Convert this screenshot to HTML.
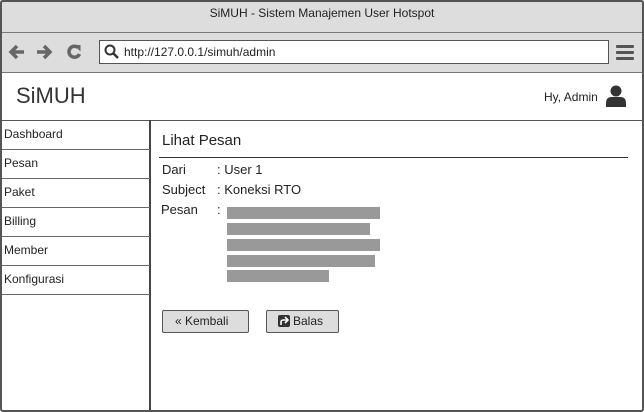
<!DOCTYPE html>
<html><head><style>
*{margin:0;padding:0;box-sizing:border-box}
body{width:644px;height:412px;overflow:hidden;font-family:"Liberation Sans",sans-serif;color:#222;background:#fff;position:relative}
.abs{position:absolute}
.frame{left:0;top:0;width:644px;height:412px;border:2px solid #555;border-radius:3px}
.side a{position:absolute;left:4px;font-size:12px;color:#222}
.hl{position:absolute;left:1px;width:149px;height:1px;background:#666}
.bar{position:absolute;left:227px;height:12px;background:#999}
.btn{position:absolute;top:310px;height:23px;background:#ddd;border:1px solid #555;border-radius:2px;font-size:12px;line-height:21px}
</style></head><body>
<div class="abs" style="left:0;top:0;width:644px;height:33px;background:#ddd"></div>
<div class="abs" style="left:0;top:6px;width:644px;text-align:center;font-size:12px">SiMUH - Sistem Manajemen User Hotspot</div>
<div class="abs" style="left:0;top:32px;width:644px;height:1px;background:#777"></div>
<div class="abs" style="left:0;top:33px;width:644px;height:39px;background:#ddd"></div>
<div class="abs" style="left:0;top:72px;width:644px;height:1px;background:#777"></div>
<svg class="abs" style="left:8px;top:43px" width="80" height="18" viewBox="0 0 80 18">
<path d="M3 9h13M9 3L3 9l6 6" stroke="#666" stroke-width="3.5" fill="none"/>
<path d="M29 9h13M36 3l6 6-6 6" stroke="#666" stroke-width="3.5" fill="none"/>
<path d="M70 4.5a5.5 5.5 0 1 0 1.5 6.5" stroke="#666" stroke-width="3.5" fill="none"/><path d="M66 2l6.5 0 0 6.5z" fill="#666"/>
</svg>
<div class="abs" style="left:99px;top:40px;width:510px;height:24px;background:#fff;border:1px solid #555"></div>
<svg class="abs" style="left:104px;top:44px" width="16" height="16"><circle cx="6" cy="6" r="4.5" stroke="#333" stroke-width="2" fill="none"/><path d="M9 9l5 5" stroke="#333" stroke-width="2.5"/></svg>
<div class="abs" style="left:124px;top:45px;font-size:12px">http://127.0.0.1/simuh/admin</div>
<svg class="abs" style="left:616px;top:44px" width="18" height="18"><rect x="0" y="1" width="18" height="3" rx="1" fill="#555"/><rect x="0" y="7" width="18" height="3" rx="1" fill="#555"/><rect x="0" y="13" width="18" height="3" rx="1" fill="#555"/></svg>
<div class="abs" style="left:16px;top:83px;font-size:22px;color:#333">SiMUH</div>
<div class="abs" style="left:544px;top:90px;font-size:12px">Hy, Admin</div>
<svg class="abs" style="left:606px;top:85px" width="20" height="22"><circle cx="10" cy="6" r="5.5" fill="#333"/><path d="M0 22v-5a5 5 0 0 1 5-5h10a5 5 0 0 1 5 5v5z" fill="#333"/></svg>
<div class="abs" style="left:0;top:120px;width:644px;height:1px;background:#555"></div>
<div class="abs" style="left:149px;top:120px;width:2px;height:292px;background:#444"></div>
<div class="side">
<a style="top:127px">Dashboard</a><a style="top:156px">Pesan</a><a style="top:185px">Paket</a><a style="top:214px">Billing</a><a style="top:243px">Member</a><a style="top:272px">Konfigurasi</a>
</div>
<div class="hl" style="top:149px"></div><div class="hl" style="top:178px"></div><div class="hl" style="top:207px"></div><div class="hl" style="top:236px"></div><div class="hl" style="top:265px"></div><div class="hl" style="top:294px"></div>
<div class="abs" style="left:162px;top:132px;font-size:15px">Lihat Pesan</div>
<div class="abs" style="left:159px;top:157px;width:469px;height:1px;background:#333"></div>
<div class="abs" style="left:162px;top:162px;font-size:13px">Dari</div><div class="abs" style="left:217px;top:162px;font-size:13px">: User 1</div>
<div class="abs" style="left:162px;top:182px;font-size:13px">Subject</div><div class="abs" style="left:217px;top:182px;font-size:13px">: Koneksi RTO</div>
<div class="abs" style="left:161px;top:202px;font-size:13px">Pesan</div><div class="abs" style="left:217px;top:202px;font-size:13px">:</div>
<div class="bar" style="top:207px;width:153px"></div>
<div class="bar" style="top:223px;width:143px"></div>
<div class="bar" style="top:239px;width:153px"></div>
<div class="bar" style="top:255px;width:148px"></div>
<div class="bar" style="top:270px;width:102px"></div>
<div class="btn" style="left:162px;width:87px;padding-left:12px">« Kembali</div>
<div class="btn" style="left:266px;width:73px;padding-left:11px"><span style="display:inline-block;width:12px;height:12px;background:#333;border-radius:2px;vertical-align:-2px;margin-right:3px;position:relative"><svg style="position:absolute;left:1px;top:1px" width="10" height="10"><path d="M2 9V6a2 2 0 0 1 2-2h4M6 1l3 3-3 3" stroke="#fff" stroke-width="1.6" fill="none"/></svg></span>Balas</div>
<div class="abs frame"></div>
</body></html>
